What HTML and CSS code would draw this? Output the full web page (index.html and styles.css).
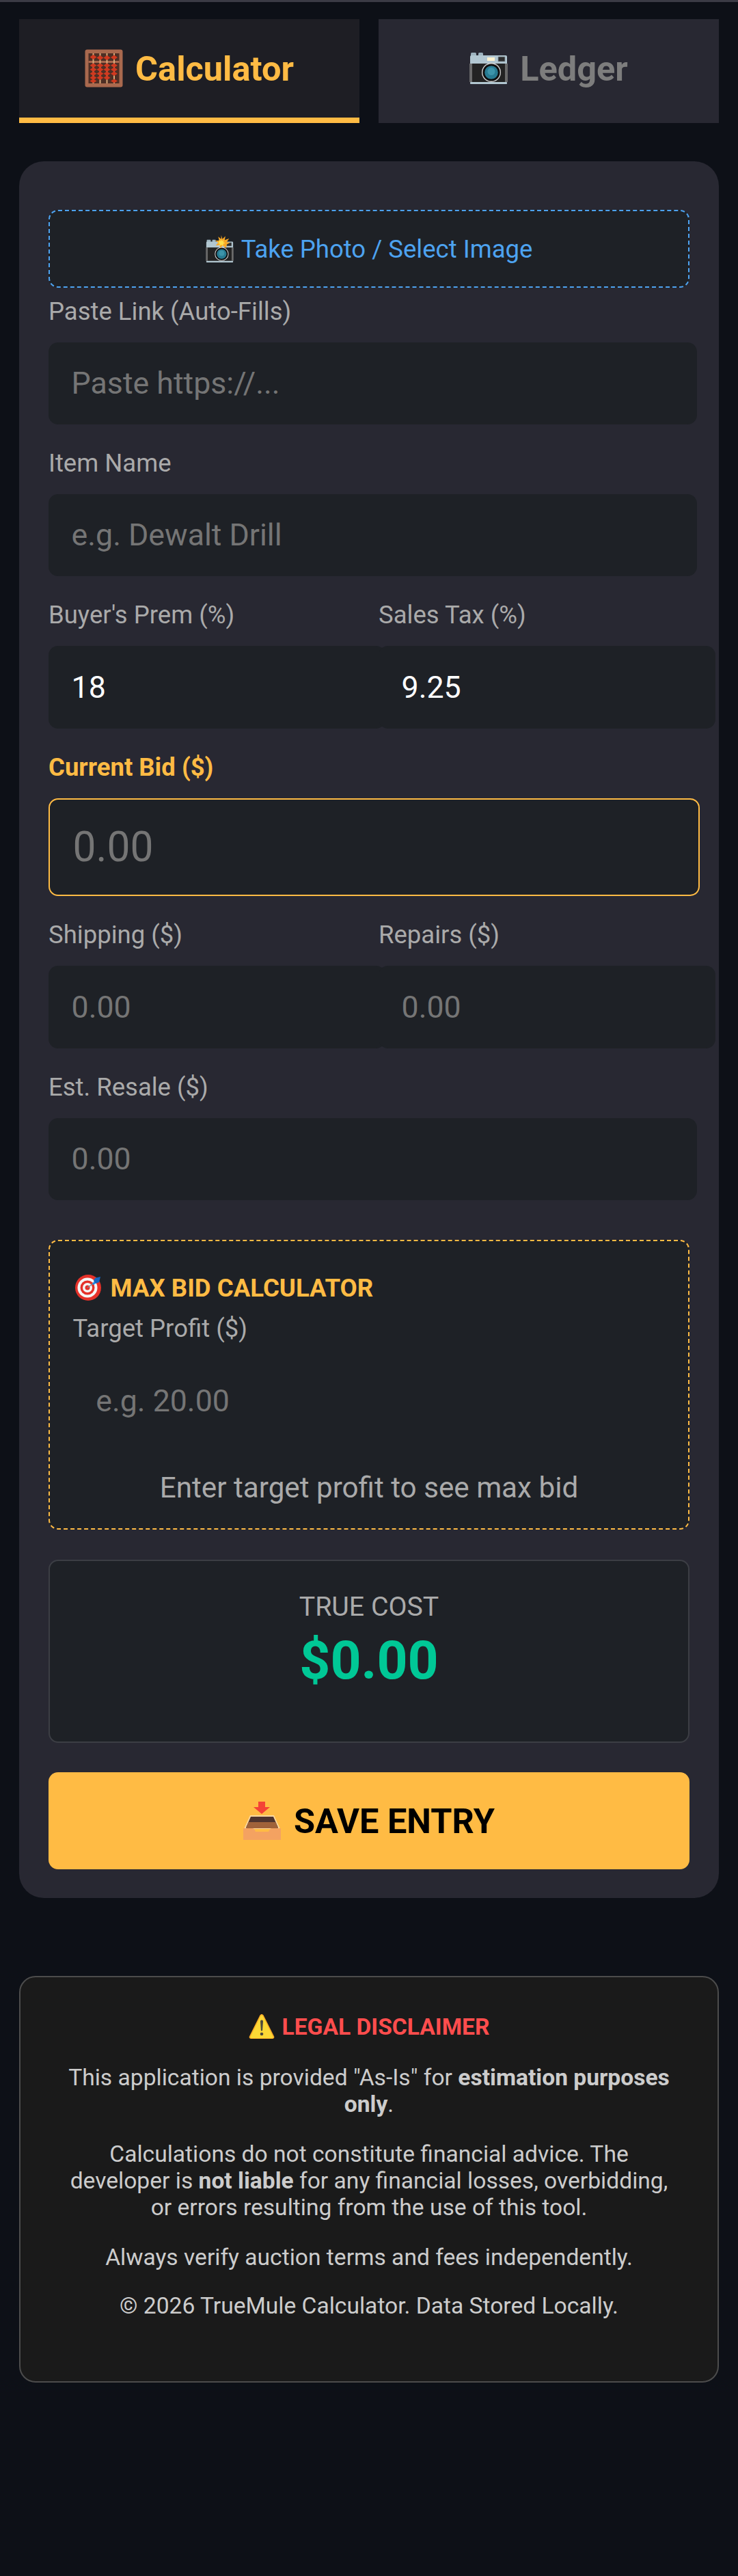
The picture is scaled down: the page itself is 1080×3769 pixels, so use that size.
FILE: index.html
```html
<!DOCTYPE html>
<html lang="en">
<head>
<meta charset="utf-8">
<title>TrueMule Calculator</title>
<link rel="stylesheet" href="styles.css">
</head>
<body>
<svg class="defs" width="0" height="0" aria-hidden="true">
  <symbol id="cam" viewBox="0 0 56 46">
    <rect x="2" y="0" width="8" height="6" rx="1.5" fill="#9db3be"/>
    <rect x="13" y="0" width="7" height="6" rx="1.5" fill="#9db3be"/>
    <path d="M1 16V6a2 2 0 0 1 2-2h50a2 2 0 0 1 2 2v10z" fill="#b2c7d1"/>
    <rect x="0" y="16" width="56" height="27" fill="#6a6a6a"/>
    <rect x="4" y="16" width="48" height="27" fill="#232323"/>
    <rect x="1" y="43" width="54" height="3" rx="1" fill="#b2c7d1"/>
    <rect x="26" y="7" width="11" height="5" fill="#fff2cf"/>
    <rect x="42" y="6" width="10" height="7" fill="#2e2e2e" stroke="#8b9ca5" stroke-width=".8"/>
    <circle cx="32" cy="29" r="14" fill="#cfcfcf"/>
    <circle cx="32" cy="29" r="12.6" fill="#0e0e0e"/>
    <circle cx="32" cy="29" r="9.8" fill="#277a91"/>
    <circle cx="32" cy="27.5" r="5.5" fill="#3c94aa"/>
  </symbol>
</svg>

<div class="topbar"></div>

<nav class="tabs">
  <button class="tab tab-active">
    <svg class="emoji-tab" viewBox="0 0 56 56" aria-hidden="true">
      <rect x="0.5" y="0.5" width="55" height="55" rx="3" fill="#a9694e"/>
      <rect x="5.5" y="6" width="45" height="44" fill="#4e2f25"/>
      <rect x="5.5" y="17" width="45" height="3" fill="#a9694e"/>
      <g fill="#d9a878">
        <rect x="11.5" y="6" width="2" height="44"/><rect x="21.5" y="6" width="2" height="44"/><rect x="31.5" y="6" width="2" height="44"/><rect x="42" y="6" width="2" height="44"/>
      </g>
      <g fill="#d1391f">
        <path d="M12.500 8l5 3.500-5 3.500-5-3.500z"/>
        <path d="M22.500 9l5 3.500-5 3.500-5-3.500z"/><path d="M32.500 9l5 3.500-5 3.500-5-3.500z"/><path d="M43 8.500l5 3.500-5 3.500-5-3.500z"/>
        <path d="M12.500 20.500l5 3.200-5 3.200-5-3.200z"/><path d="M22.500 20.500l5 3.200-5 3.200-5-3.200z"/><path d="M32.500 20.500l5 3.200-5 3.200-5-3.200z"/><path d="M43 20.500l5 3.200-5 3.200-5-3.200z"/>
        <path d="M12.500 26.500l5 3.200-5 3.200-5-3.200z"/><path d="M22.500 26.500l5 3.200-5 3.200-5-3.200z"/><path d="M32.500 26.500l5 3.200-5 3.200-5-3.200z"/><path d="M43 26.500l5 3.200-5 3.200-5-3.200z"/>
        <path d="M12.500 32.500l5 3.200-5 3.200-5-3.200z"/><path d="M22.500 32.500l5 3.200-5 3.200-5-3.200z"/><path d="M32.500 32.500l5 3.200-5 3.200-5-3.200z"/><path d="M43 32.500l5 3.200-5 3.200-5-3.200z"/>
        <path d="M12.500 38.500l5 3.200-5 3.200-5-3.200z"/><path d="M22.500 38.500l5 3.200-5 3.200-5-3.200z"/><path d="M32.500 38.500l5 3.200-5 3.200-5-3.200z"/>
        <path d="M12.500 43.500l5 3-5 3-5-3z"/><path d="M43 43.500l5 3-5 3-5-3z"/>
      </g>
    </svg>
    <span>Calculator</span>
  </button>
  <button class="tab">
    <svg class="emoji-tab" viewBox="0 0 56 46" aria-hidden="true"><use href="#cam"/></svg>
    <span>Ledger</span>
  </button>
</nav>

<main class="card">
  <button class="upload">
    <svg class="emoji-upload" viewBox="0 -9 56 55" aria-hidden="true">
      <use href="#cam" width="56" height="46"/>
      <path d="M31 -9l2.500 8 6-6-1.500 8 9-3-5 7 7 1-7 4-1 7-7-5-5 5-1-6-8 1 5-6-6-4 8 0-2-8 6 5z" fill="#f9a825"/>
      <path d="M31 -1l1.500 4 4-2-1.500 4 4 2-4 1.500 0 4-4-2-3 2 0-4-4-1.500 3-2-1-4 4 2z" fill="#ffe14d"/>
    </svg>
    <span>Take Photo / Select Image</span>
  </button>

  <label class="field-label">Paste Link (Auto-Fills)</label>
  <input class="field wide" type="text" placeholder="Paste https://...">

  <label class="field-label">Item Name</label>
  <input class="field wide" type="text" placeholder="e.g. Dewalt Drill">

  <div class="pair">
    <div class="cell">
      <label class="field-label">Buyer's Prem (%)</label>
      <input class="field half" type="text" value="18">
    </div>
    <div class="cell">
      <label class="field-label">Sales Tax (%)</label>
      <input class="field half" type="text" value="9.25">
    </div>
  </div>

  <label class="field-label label-bid">Current Bid ($)</label>
  <input class="field field-bid" type="text" placeholder="0.00">

  <div class="pair">
    <div class="cell">
      <label class="field-label">Shipping ($)</label>
      <input class="field half" type="text" placeholder="0.00">
    </div>
    <div class="cell">
      <label class="field-label">Repairs ($)</label>
      <input class="field half" type="text" placeholder="0.00">
    </div>
  </div>

  <label class="field-label">Est. Resale ($)</label>
  <input class="field wide" type="text" placeholder="0.00">

  <section class="maxbid">
    <h3 class="maxbid-title">
      <svg class="emoji-target" viewBox="0 0 38 38" aria-hidden="true">
        <circle cx="19" cy="19" r="19" fill="#e53129"/>
        <path d="M19 0a19 19 0 0 1 0 38 19 19 0 0 0 0-38z" fill="#c62828"/>
        <circle cx="18" cy="19" r="14.500" fill="#f5f5f5"/>
        <circle cx="18" cy="19" r="10.500" fill="#e53129"/>
        <circle cx="18" cy="19" r="7" fill="#f5f5f5"/>
        <circle cx="18" cy="19" r="3.500" fill="#e53129"/>
        <path d="M18 19L30 10" stroke="#78909c" stroke-width="1.400"/>
        <path d="M25 13l5-5 2 3-5 4z" fill="#1e88e5"/>
        <path d="M29 5l8-2-2 8-5 2-3-4z" fill="#1565c0"/>
      </svg>
      <span>MAX BID CALCULATOR</span>
    </h3>
    <label class="field-label">Target Profit ($)</label>
    <input class="field field-bare" type="text" placeholder="e.g. 20.00">
    <p class="maxbid-note">Enter target profit to see max bid</p>
  </section>

  <section class="cost">
    <div class="cost-label">TRUE COST</div>
    <div class="cost-value">$0.00</div>
  </section>

  <button class="save">
    <svg class="emoji-save" viewBox="0 0 55 56" aria-hidden="true">
      <path d="M22 0h10v8h7L27 18 15 8h7z" fill="#f44336"/>
      <path d="M10 20h35l9 20H1z" fill="#ffd9a0"/>
      <path d="M11 22h33l7 16H4z" fill="#4e342e"/>
      <path d="M7.500 30h40l3.500 9H4z" fill="#a0623a"/>
      <path d="M0 39h13c2 0 3 1 4 3l1 2h19l1-2c1-2 2-3 4-3h13v17H0z" fill="#f4a261"/>
    </svg>
    <span>SAVE ENTRY</span>
  </button>
</main>

<footer class="legal">
  <h4 class="legal-title">
    <svg class="emoji-warn" viewBox="0 0 38 38" aria-hidden="true">
      <path d="M19 1c1 0 2 .6 2.600 1.600l15.500 31c.8 1.700-.2 3.400-2.100 3.400H3c-1.900 0-2.900-1.700-2.100-3.400l15.500-31C17 1.600 18 1 19 1z" fill="#f9a825"/>
      <path d="M19 2.500c.6 0 1.200.4 1.600 1.100l15 30.500c.5 1-.1 1.900-1.200 1.900H3.600c-1.100 0-1.700-.9-1.200-1.900l15-30.500c.4-.7 1-1.100 1.600-1.100z" fill="#fdd835"/>
      <path d="M17 11.500a2 2 0 0 1 4 0l-.9 13a1.100 1.100 0 0 1-2.200 0z" fill="#4e4a3c"/>
      <circle cx="19" cy="30" r="2.300" fill="#4e4a3c"/>
    </svg>
    <span>LEGAL DISCLAIMER</span>
  </h4>
  <p class="legal-p">This application is provided "As-Is" for <b>estimation purposes only</b>.</p>
  <p class="legal-p gap-lg">Calculations do not constitute financial advice. The developer is <b>not liable</b> for any financial losses, overbidding, or errors resulting from the use of this tool.</p>
  <p class="legal-p gap-lg">Always verify auction terms and fees independently.</p>
  <p class="legal-p gap-md">© 2026 TrueMule Calculator. Data Stored Locally.</p>
</footer>
</body>
</html>
```
FILE: styles.css
```css
* { box-sizing: border-box; }
html, body { margin: 0; padding: 0; }
body {
  width: 1080px;
  min-height: 3769px;
  background: #0d1017;
  color: #fff;
  font-family: Roboto, "Liberation Sans", sans-serif;
}
.defs { position: absolute; }
.topbar { height: 3px; background: #3b3b45; }

.tabs {
  display: grid;
  grid-template-columns: 498px 498px;
  gap: 28px;
  margin: 25px 28px 0;
}
.tab {
  display: flex;
  align-items: center;
  justify-content: center;
  gap: 18px;
  height: 152px;
  padding: 0;
  border: 0;
  border-bottom: 8px solid transparent;
  background: #282832;
  color: #7d7d7d;
  font: 700 50.500px Roboto, sans-serif;
}
.tab-active {
  background: #1e1e24;
  color: #ffbb44;
  border-bottom-color: #ffbb44;
}
.emoji-tab { width: 56px; height: 56px; }

.card {
  margin: 56px 28px 0;
  height: 2541px;
  padding: 71px 43px 0;
  background: #282832;
  border-radius: 36px;
}
.upload {
  display: flex;
  align-items: center;
  justify-content: center;
  gap: 11px;
  width: 938px;
  height: 114px;
  padding: 0;
  background: #1e2126;
  border: 2.400px dashed #4da3f0;
  border-radius: 14px;
  color: #4da3f0;
  font: 400 36.500px Roboto, sans-serif;
}
.emoji-upload { width: 41px; height: 40px; }

.field-label {
  display: block;
  height: 40px;
  margin: 0 0 25px;
  color: #aaa;
  font-size: 36.500px;
  line-height: 40px;
}
.upload + .field-label { margin-top: 15px; }
.field {
  display: block;
  height: 120px;
  margin: 0 0 37px;
  padding: 0 33.600px;
  border: 0;
  outline: 0;
  background: #1e2126;
  border-radius: 14px;
  color: #fff;
  font: 400 44.700px Roboto, sans-serif;
}
.field::placeholder { color: #757575; opacity: 1; }
.wide { width: 949px; }
.half { width: 493px; height: 121px; }
.pair {
  display: grid;
  grid-template-columns: 455px 455px;
  gap: 28px;
}
.cell { min-width: 0; }
.label-bid { color: #ffbb44; font-weight: 700; }
.field-bid {
  width: 953px;
  height: 143px;
  padding: 0 33.600px;
  border: 2.400px solid #ffbb44;
  font-size: 60.500px;
}

.maxbid {
  width: 938px;
  height: 424px;
  margin-top: 58px;
  padding: 48px 33.600px 0;
  background: #1e2126;
  border: 2.400px dashed #ffbb44;
  border-radius: 14px;
}
.maxbid-title {
  display: flex;
  align-items: center;
  gap: 14px;
  height: 40px;
  margin: 0;
  color: #ffbb44;
  font-size: 36.600px;
  font-weight: 700;
}
.emoji-target { width: 38px; height: 38px; margin-left: 3px; }
.maxbid .field-label { margin-top: 20px; margin-bottom: 25px; }
.field-bare { width: 100%; height: 121px; margin: 0; background: transparent; }
.maxbid-note {
  margin: 43px 0 0;
  color: #aaa;
  font-size: 42.200px;
  line-height: 47px;
  text-align: center;
}

.cost {
  width: 938px;
  height: 268px;
  margin-top: 44px;
  padding-top: 44px;
  background: #1e2126;
  border: 2.400px solid #3c3e44;
  border-radius: 14px;
  text-align: center;
}
.cost-label { color: #aaa; font-size: 39.300px; line-height: 46px; }
.cost-value { margin-top: 10px; color: #00c896; font-size: 78.700px; font-weight: 700; line-height: 90px; }

.save {
  display: flex;
  align-items: center;
  justify-content: center;
  gap: 19px;
  width: 938px;
  height: 142px;
  margin-top: 43px;
  padding: 0;
  border: 0;
  background: #ffbb44;
  border-radius: 14px;
  color: #000;
  font: 700 50.500px Roboto, sans-serif;
}
.emoji-save { width: 55px; height: 56px; }

.legal {
  height: 595px;
  margin: 114px 28px 0;
  padding: 52px 62px 0;
  background: #1a1a1a;
  border: 2.400px solid #4c4c4c;
  border-radius: 24px;
  text-align: center;
  color: #ccc;
  font-size: 33.600px;
  line-height: 39px;
}
.legal-title {
  display: flex;
  align-items: center;
  justify-content: center;
  gap: 11px;
  height: 40px;
  margin: 0 0 34.500px;
  color: #ff4d4d;
  font-size: 33.600px;
  font-weight: 700;
}
.emoji-warn { width: 38px; height: 38px; }
.legal-p { margin: 0; }
.gap-lg { margin-top: 34px; }
.gap-md { margin-top: 32.500px; }
```
